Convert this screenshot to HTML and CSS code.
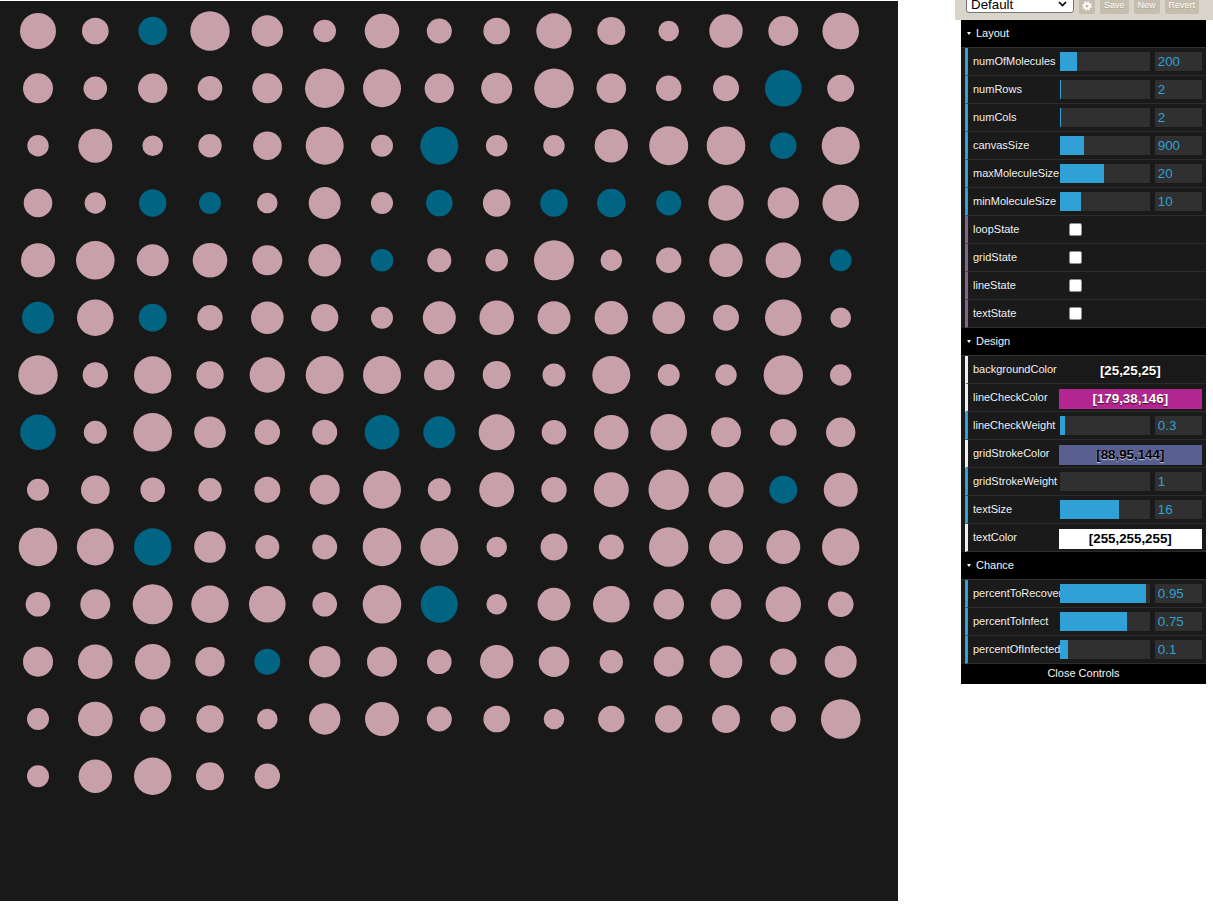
FILE: index.html
```html
<!DOCTYPE html>
<html lang="en">
<head>
<meta charset="utf-8">
<title>Molecules</title>
<link rel="stylesheet" href="styles.css">
</head>
<body>
<div class="page">
  <div class="canvas">
    <svg width="898" height="900" viewBox="0 0 898 900">
      <g transform="translate(0,30)">
        <circle class="p" cx="38" r="18"/><circle class="p" cx="95.3" r="13.3"/><circle class="t" cx="152.7" r="14.3"/><circle class="p" cx="210" r="19.7"/><circle class="p" cx="267.3" r="15.7"/><circle class="p" cx="324.7" r="11.3"/><circle class="p" cx="382" r="17.3"/><circle class="p" cx="439.3" r="12.5"/><circle class="p" cx="496.7" r="13.3"/><circle class="p" cx="554" r="17.7"/><circle class="p" cx="611.3" r="14"/><circle class="p" cx="668.7" r="10.3"/><circle class="p" cx="726" r="16.7"/><circle class="p" cx="783.3" r="15"/><circle class="p" cx="840.7" r="18.3"/>
      </g>
      <g transform="translate(0,87.3)">
        <circle class="p" cx="38" r="15"/><circle class="p" cx="95.3" r="11.8"/><circle class="p" cx="152.7" r="14.7"/><circle class="p" cx="210" r="12.3"/><circle class="p" cx="267.3" r="15"/><circle class="p" cx="324.7" r="19.7"/><circle class="p" cx="382" r="19"/><circle class="p" cx="439.3" r="14.7"/><circle class="p" cx="496.7" r="15.5"/><circle class="p" cx="554" r="19.8"/><circle class="p" cx="611.3" r="14.8"/><circle class="p" cx="668.7" r="12.7"/><circle class="p" cx="726" r="13"/><circle class="t" cx="783.3" r="18.3"/><circle class="p" cx="840.7" r="13.5"/>
      </g>
      <g transform="translate(0,144.7)">
        <circle class="p" cx="38" r="10.7"/><circle class="p" cx="95.3" r="17"/><circle class="p" cx="152.7" r="10.3"/><circle class="p" cx="210" r="11.7"/><circle class="p" cx="267.3" r="14.3"/><circle class="p" cx="324.7" r="19"/><circle class="p" cx="382" r="11"/><circle class="t" cx="439.3" r="19"/><circle class="p" cx="496.7" r="10.8"/><circle class="p" cx="554" r="10.7"/><circle class="p" cx="611.3" r="16.7"/><circle class="p" cx="668.7" r="19.5"/><circle class="p" cx="726" r="19.3"/><circle class="t" cx="783.3" r="13.3"/><circle class="p" cx="840.7" r="19"/>
      </g>
      <g transform="translate(0,202)">
        <circle class="p" cx="38" r="14.3"/><circle class="p" cx="95.3" r="10.7"/><circle class="t" cx="152.7" r="13.7"/><circle class="t" cx="210" r="11"/><circle class="p" cx="267.3" r="10.3"/><circle class="p" cx="324.7" r="16"/><circle class="p" cx="382" r="11"/><circle class="t" cx="439.3" r="13.3"/><circle class="p" cx="496.7" r="13.8"/><circle class="t" cx="554" r="13.8"/><circle class="t" cx="611.3" r="14.3"/><circle class="t" cx="668.7" r="12.5"/><circle class="p" cx="726" r="17.7"/><circle class="p" cx="783.3" r="15.7"/><circle class="p" cx="840.7" r="18.3"/>
      </g>
      <g transform="translate(0,259.3)">
        <circle class="p" cx="38" r="17"/><circle class="p" cx="95.3" r="19.3"/><circle class="p" cx="152.7" r="16"/><circle class="p" cx="210" r="17.3"/><circle class="p" cx="267.3" r="15"/><circle class="p" cx="324.7" r="16.3"/><circle class="t" cx="382" r="11.3"/><circle class="p" cx="439.3" r="12"/><circle class="p" cx="496.7" r="11.3"/><circle class="p" cx="554" r="20"/><circle class="p" cx="611.3" r="10.7"/><circle class="p" cx="668.7" r="12.7"/><circle class="p" cx="726" r="16.7"/><circle class="p" cx="783.3" r="17.7"/><circle class="t" cx="840.7" r="11"/>
      </g>
      <g transform="translate(0,316.7)">
        <circle class="t" cx="38" r="16"/><circle class="p" cx="95.3" r="18.3"/><circle class="t" cx="152.7" r="14"/><circle class="p" cx="210" r="12.7"/><circle class="p" cx="267.3" r="16.3"/><circle class="p" cx="324.7" r="13.7"/><circle class="p" cx="382" r="11"/><circle class="p" cx="439.3" r="16.5"/><circle class="p" cx="496.7" r="17.3"/><circle class="p" cx="554" r="16.5"/><circle class="p" cx="611.3" r="16.7"/><circle class="p" cx="668.7" r="16.3"/><circle class="p" cx="726" r="13"/><circle class="p" cx="783.3" r="18.3"/><circle class="p" cx="840.7" r="10.3"/>
      </g>
      <g transform="translate(0,374)">
        <circle class="p" cx="38" r="19.7"/><circle class="p" cx="95.3" r="12.7"/><circle class="p" cx="152.7" r="18.7"/><circle class="p" cx="210" r="13.7"/><circle class="p" cx="267.3" r="17.7"/><circle class="p" cx="324.7" r="19"/><circle class="p" cx="382" r="19"/><circle class="p" cx="439.3" r="15.3"/><circle class="p" cx="496.7" r="14"/><circle class="p" cx="554" r="11.5"/><circle class="p" cx="611.3" r="19"/><circle class="p" cx="668.7" r="11"/><circle class="p" cx="726" r="10.7"/><circle class="p" cx="783.3" r="19.7"/><circle class="p" cx="840.7" r="10.7"/>
      </g>
      <g transform="translate(0,431.3)">
        <circle class="t" cx="38" r="17.8"/><circle class="p" cx="95.3" r="11.5"/><circle class="p" cx="152.7" r="19.3"/><circle class="p" cx="210" r="15.8"/><circle class="p" cx="267.3" r="12.7"/><circle class="p" cx="324.7" r="12.5"/><circle class="t" cx="382" r="17.3"/><circle class="t" cx="439.3" r="16"/><circle class="p" cx="496.7" r="18"/><circle class="p" cx="554" r="12.3"/><circle class="p" cx="611.3" r="17.3"/><circle class="p" cx="668.7" r="18.3"/><circle class="p" cx="726" r="15"/><circle class="p" cx="783.3" r="13.3"/><circle class="p" cx="840.7" r="14.7"/>
      </g>
      <g transform="translate(0,488.7)">
        <circle class="p" cx="38" r="11"/><circle class="p" cx="95.3" r="14.3"/><circle class="p" cx="152.7" r="12.3"/><circle class="p" cx="210" r="11.7"/><circle class="p" cx="267.3" r="13"/><circle class="p" cx="324.7" r="15"/><circle class="p" cx="382" r="19"/><circle class="p" cx="439.3" r="11.5"/><circle class="p" cx="496.7" r="17.5"/><circle class="p" cx="554" r="12.7"/><circle class="p" cx="611.3" r="17.5"/><circle class="p" cx="668.7" r="20.2"/><circle class="p" cx="726" r="17.7"/><circle class="t" cx="783.3" r="14"/><circle class="p" cx="840.7" r="17"/>
      </g>
      <g transform="translate(0,546)">
        <circle class="p" cx="38" r="19.3"/><circle class="p" cx="95.3" r="18.5"/><circle class="t" cx="152.7" r="18.7"/><circle class="p" cx="210" r="15.8"/><circle class="p" cx="267.3" r="12"/><circle class="p" cx="324.7" r="12.5"/><circle class="p" cx="382" r="19.3"/><circle class="p" cx="439.3" r="19"/><circle class="p" cx="496.7" r="10.3"/><circle class="p" cx="554" r="13.5"/><circle class="p" cx="611.3" r="12.5"/><circle class="p" cx="668.7" r="19.7"/><circle class="p" cx="726" r="17"/><circle class="p" cx="783.3" r="17"/><circle class="p" cx="840.7" r="18.7"/>
      </g>
      <g transform="translate(0,603.3)">
        <circle class="p" cx="38" r="12.3"/><circle class="p" cx="95.3" r="15"/><circle class="p" cx="152.7" r="20"/><circle class="p" cx="210" r="18.7"/><circle class="p" cx="267.3" r="18.3"/><circle class="p" cx="324.7" r="12.3"/><circle class="p" cx="382" r="19.3"/><circle class="t" cx="439.3" r="18.5"/><circle class="p" cx="496.7" r="10.3"/><circle class="p" cx="554" r="16.5"/><circle class="p" cx="611.3" r="18.3"/><circle class="p" cx="668.7" r="15.3"/><circle class="p" cx="726" r="15.3"/><circle class="p" cx="783.3" r="17.7"/><circle class="p" cx="840.7" r="12.8"/>
      </g>
      <g transform="translate(0,660.7)">
        <circle class="p" cx="38" r="15"/><circle class="p" cx="95.3" r="17.3"/><circle class="p" cx="152.7" r="17.8"/><circle class="p" cx="210" r="14.7"/><circle class="t" cx="267.3" r="13"/><circle class="p" cx="324.7" r="15.7"/><circle class="p" cx="382" r="15"/><circle class="p" cx="439.3" r="12.3"/><circle class="p" cx="496.7" r="16.7"/><circle class="p" cx="554" r="15.3"/><circle class="p" cx="611.3" r="11.7"/><circle class="p" cx="668.7" r="15"/><circle class="p" cx="726" r="16.3"/><circle class="p" cx="783.3" r="13.3"/><circle class="p" cx="840.7" r="16"/>
      </g>
      <g transform="translate(0,718)">
        <circle class="p" cx="38" r="11"/><circle class="p" cx="95.3" r="17.3"/><circle class="p" cx="152.7" r="12.8"/><circle class="p" cx="210" r="13.7"/><circle class="p" cx="267.3" r="10.3"/><circle class="p" cx="324.7" r="15.7"/><circle class="p" cx="382" r="17"/><circle class="p" cx="439.3" r="12.5"/><circle class="p" cx="496.7" r="13.3"/><circle class="p" cx="554" r="10.3"/><circle class="p" cx="611.3" r="13.2"/><circle class="p" cx="668.7" r="13.7"/><circle class="p" cx="726" r="14"/><circle class="p" cx="783.3" r="12.7"/><circle class="p" cx="840.7" r="19.8"/>
      </g>
      <g transform="translate(0,775.3)">
        <circle class="p" cx="38" r="11"/><circle class="p" cx="95.3" r="16.7"/><circle class="p" cx="152.7" r="18.7"/><circle class="p" cx="210" r="14"/><circle class="p" cx="267.3" r="12.7"/>
      </g>
    </svg>
  </div>

  <div class="gui">
    <div class="save-row">
      <div class="select">
        <span>Default</span>
        <svg class="chev" width="9" height="6" viewBox="0 0 9 6"><path d="M1 1 L4.5 4.5 L8 1" fill="none" stroke="#000" stroke-width="1.6"/></svg>
      </div>
      <span class="btn gears">
        <svg width="10" height="10" viewBox="0 0 10 10"><circle cx="5" cy="5" r="2.5" fill="none" stroke="#fff" stroke-width="1.8"/><circle cx="5" cy="5" r="3.9" fill="none" stroke="#fff" stroke-width="1.8" stroke-dasharray="1.53 1.53"/></svg>
      </span>
      <span class="btn">Save</span>
      <span class="btn">New</span>
      <span class="btn">Revert</span>
    </div>

    <div class="folder">
      <div class="title"><i class="tri"></i>Layout</div>
      <ul class="rows">
        <li class="row"><span class="name">numOfMolecules</span><div class="c"><div class="slider"><div class="fg" style="width:19%"></div></div><div class="num">200</div></div></li>
        <li class="row"><span class="name">numRows</span><div class="c"><div class="slider"><div class="fg" style="width:1px"></div></div><div class="num">2</div></div></li>
        <li class="row"><span class="name">numCols</span><div class="c"><div class="slider"><div class="fg" style="width:1px"></div></div><div class="num">2</div></div></li>
        <li class="row"><span class="name">canvasSize</span><div class="c"><div class="slider"><div class="fg" style="width:26.5%"></div></div><div class="num">900</div></div></li>
        <li class="row"><span class="name">maxMoleculeSize</span><div class="c"><div class="slider"><div class="fg" style="width:48.5%"></div></div><div class="num">20</div></div></li>
        <li class="row"><span class="name">minMoleculeSize</span><div class="c"><div class="slider"><div class="fg" style="width:23.5%"></div></div><div class="num">10</div></div></li>
        <li class="row bool"><span class="name">loopState</span><div class="c"><span class="check"></span></div></li>
        <li class="row bool"><span class="name">gridState</span><div class="c"><span class="check"></span></div></li>
        <li class="row bool"><span class="name">lineState</span><div class="c"><span class="check"></span></div></li>
        <li class="row bool"><span class="name">textState</span><div class="c"><span class="check"></span></div></li>
      </ul>
    </div>

    <div class="folder">
      <div class="title"><i class="tri"></i>Design</div>
      <ul class="rows">
        <li class="row color"><span class="name">backgroundColor</span><div class="c"><div class="cbox light" style="background:#191919">[25,25,25]</div></div></li>
        <li class="row color"><span class="name">lineCheckColor</span><div class="c"><div class="cbox light" style="background:#b32692">[179,38,146]</div></div></li>
        <li class="row"><span class="name">lineCheckWeight</span><div class="c"><div class="slider"><div class="fg" style="width:6.5%"></div></div><div class="num">0.3</div></div></li>
        <li class="row color"><span class="name">gridStrokeColor</span><div class="c"><div class="cbox dark" style="background:#585f90">[88,95,144]</div></div></li>
        <li class="row"><span class="name">gridStrokeWeight</span><div class="c"><div class="slider"><div class="fg" style="width:0"></div></div><div class="num">1</div></div></li>
        <li class="row"><span class="name">textSize</span><div class="c"><div class="slider"><div class="fg" style="width:66%"></div></div><div class="num">16</div></div></li>
        <li class="row color"><span class="name">textColor</span><div class="c"><div class="cbox dark" style="background:#ffffff">[255,255,255]</div></div></li>
      </ul>
    </div>

    <div class="folder">
      <div class="title"><i class="tri"></i>Chance</div>
      <ul class="rows">
        <li class="row"><span class="name">percentToRecover</span><div class="c"><div class="slider"><div class="fg" style="width:95%"></div></div><div class="num">0.95</div></div></li>
        <li class="row"><span class="name">percentToInfect</span><div class="c"><div class="slider"><div class="fg" style="width:74%"></div></div><div class="num">0.75</div></div></li>
        <li class="row"><span class="name">percentOfInfected</span><div class="c"><div class="slider"><div class="fg" style="width:9%"></div></div><div class="num">0.1</div></div></li>
      </ul>
    </div>

    <div class="close">Close Controls</div>
  </div>
</div>
</body>
</html>
```

FILE: styles.css
```css
* { box-sizing: border-box; }

html, body {
  margin: 0;
  padding: 0;
  background: #fff;
}

body {
  font-family: "Liberation Sans", Arial, sans-serif;
}

.page {
  display: flex;
  align-items: flex-start;
}

.canvas {
  flex: none;
  width: 898px;
  height: 900px;
  margin-top: 1px;
  background: #191919;
}

.canvas svg { display: block; }

.p { fill: #c8a0a9; }
.t { fill: #006482; }

/* control panel (overlay, like dat.GUI) */
.gui {
  position: absolute;
  top: 0;
  left: 961px;
  width: 245px;
  color: #f2f2f2;
  font: 11px "Liberation Sans", Arial, sans-serif;
  text-shadow: 0 -1px 0 #111;
}

.save-row {
  display: flex;
  align-items: flex-start;
  height: 20px;
  width: 258px;
  margin-left: -6px;
  padding-left: 11px;
  background: #dad5cb;
  overflow: hidden;
}

.select {
  flex: none;
  display: flex;
  align-items: flex-start;
  justify-content: space-between;
  width: 108px;
  height: 20px;
  margin-top: -7px;
  padding: 3px 6px 0 4px;
  background: #fff;
  border: 1px solid #767676;
  border-radius: 3px;
  color: #000;
  font: 13.33px/15px "Liberation Sans", Arial, sans-serif;
  text-shadow: none;
}

.chev { margin-top: 4px; }

.btn {
  flex: none;
  height: 16px;
  margin: -2px 0 0 5px;
  padding: 4px 4px 5px;
  border-radius: 2px;
  background: #c5bdad;
  color: #fff;
  font-size: 9px;
  line-height: 7px;
  text-shadow: 0 1px 0 #b0a58f;
  box-shadow: 0 -1px 0 #b0a58f;
}

.btn.gears {
  width: 16px;
  padding: 0;
  display: flex;
  align-items: center;
  justify-content: center;
}

.folder {
  border-left: 4px solid #1a1a1a;
}

.title {
  display: flex;
  align-items: flex-start;
  margin-left: -4px;
  height: 28px;
  line-height: 27px;
  padding-left: 6px;
  background: #000;
  border-bottom: 1px solid #333;
}

.tri {
  width: 0;
  height: 0;
  margin: 12px 5px 0 0;
  border-left: 2.5px solid transparent;
  border-right: 2.5px solid transparent;
  border-top: 3px solid #fff;
}

.rows {
  list-style: none;
  margin: 0;
  padding: 0;
}

.row {
  display: flex;
  height: 28px;
  line-height: 27px;
  padding: 0 4px 0 5px;
  background: #1a1a1a;
  border-bottom: 1px solid #2c2c2c;
  border-left: 3px solid #2fa1d6;
}

.row.bool { border-left-color: #806787; }
.row.color { border-left-color: #eee; }

.name {
  flex: none;
  width: 91.6px;
  overflow: hidden;
  white-space: nowrap;
}

.c {
  flex: none;
  width: 137.4px;
  display: flex;
  align-items: flex-start;
}

.slider {
  flex: none;
  width: 90.7px;
  height: 19px;
  margin: 4px 0 0 -5px;
  background: #303030;
}

.fg {
  height: 100%;
  max-width: 100%;
  background: #2fa1d6;
}

.num {
  flex: none;
  width: 47.2px;
  height: 19px;
  margin: 4px 0 0 auto;
  padding: 3px;
  background: #303030;
  color: #2fa1d6;
  font-size: 13.33px;
  line-height: 13px;
  text-shadow: none;
}

.check {
  flex: none;
  width: 13px;
  height: 13px;
  margin: 7px 0 0 4px;
  background: #fff;
  border: 1px solid #8f8f8f;
  border-radius: 2px;
}

.cbox {
  flex: none;
  width: 143.4px;
  height: 20px;
  margin: 5px 0 0 -6px;
  text-align: center;
  font-size: 13.33px;
  font-weight: bold;
  line-height: 20px;
}

.cbox.light {
  color: #fff;
  text-shadow: 0 1px 1px rgba(0, 0, 0, 0.7);
}

.cbox.dark {
  color: #000;
  text-shadow: 0 1px 1px rgba(255, 255, 255, 0.7);
}

.close {
  height: 20px;
  line-height: 19px;
  text-align: center;
  background: #000;
}
```
